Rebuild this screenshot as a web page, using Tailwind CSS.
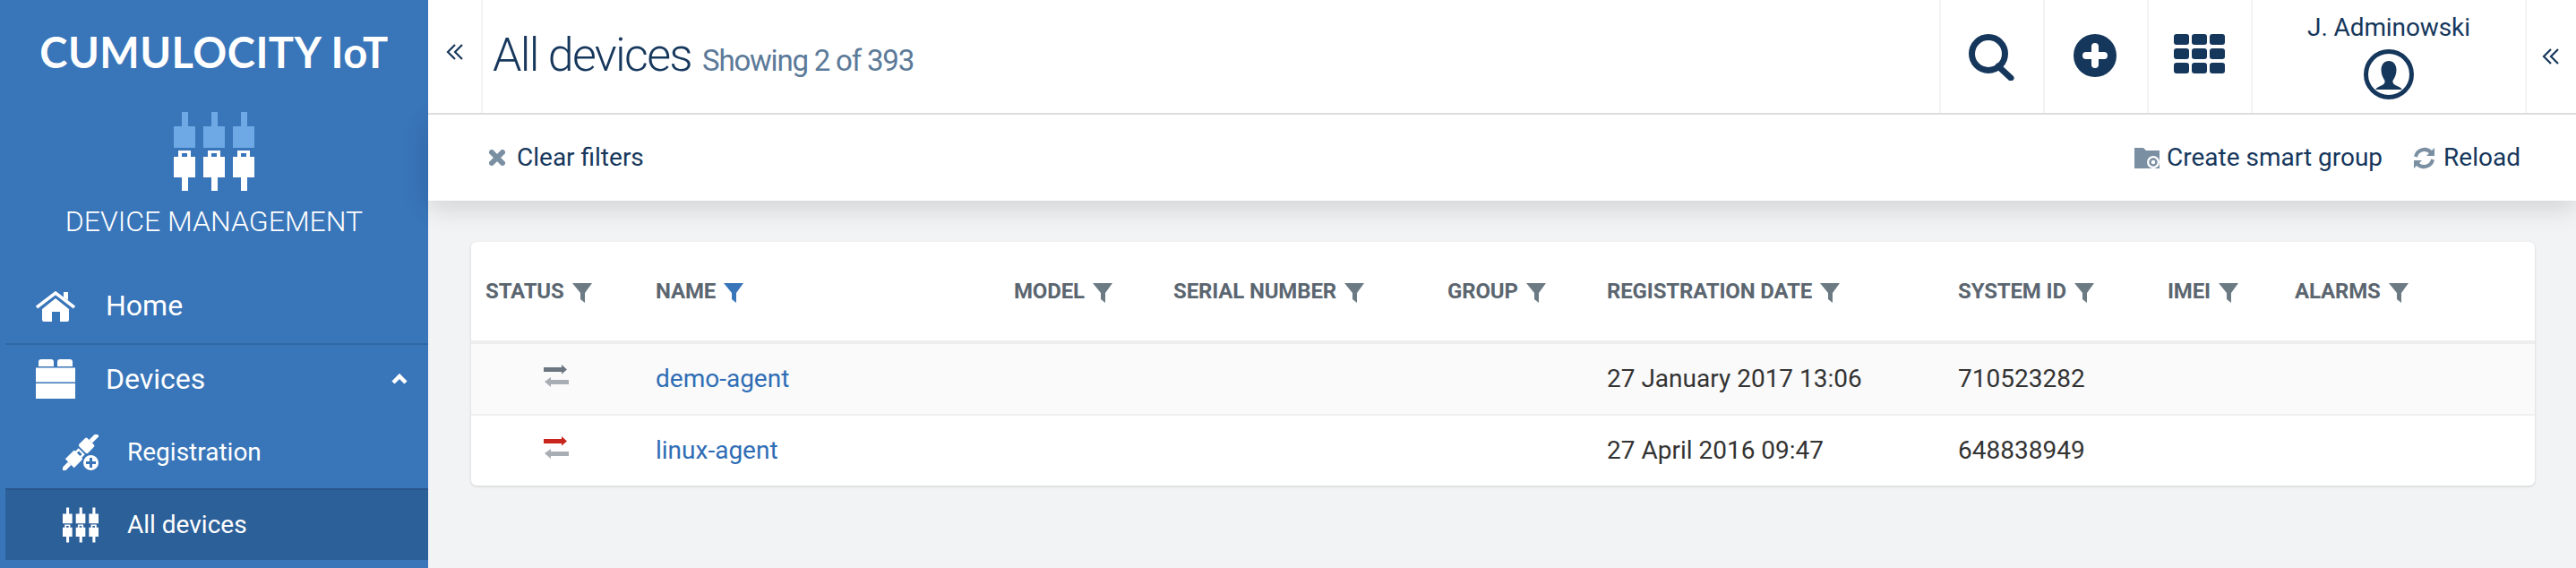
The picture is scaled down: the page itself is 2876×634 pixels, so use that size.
<!DOCTYPE html>
<html lang="en">
<head>
  <meta charset="UTF-8">
  <title>All devices</title>
  <script src="https://cdn.jsdelivr.net/npm/@tailwindcss/browser@4"></script>
</head>
<body class="h-[634px] w-[2876px] overflow-hidden bg-[#f2f3f5] font-['Roboto',sans-serif] flex">

  <!-- icon sprites -->
  <svg class="hidden">
    <symbol id="funnel" viewBox="0 0 22 22"><path d="M0 0H22L14 11V22L9 18V11Z" fill="currentColor"/></symbol>
    <symbol id="chevrons" viewBox="0 0 20 18"><path d="M10 1L2 9L10 17M18 1L10 9L18 17" fill="none" stroke="currentColor" stroke-width="2.2"/></symbol>
    <symbol id="transfer" viewBox="0 0 28 25">
      <path d="M0 3H20V0L26 5.500L20 10.500V8H0Z" fill="currentColor"/>
      <path d="M28 17H8V14L1 19L8 25V22H28Z" fill="#a8aeb4"/>
    </symbol>
    <symbol id="plugs" viewBox="0 0 90 88">
      <g fill="currentColor">
        <path d="M9 0H16V16H24V40H0V16H9ZM42 0H49V16H57V40H33V16H42ZM75 0H82V16H90V40H66V16H75Z"/>
      </g>
      <g fill="#fff">
        <path fill-rule="evenodd" d="M5 43H19V50H24V73H16V88H9V73H0V50H5ZM9 46V50H15V46Z"/>
        <path fill-rule="evenodd" d="M38 43H52V50H57V73H49V88H42V73H33V50H38ZM42 46V50H48V46Z"/>
        <path fill-rule="evenodd" d="M71 43H85V50H90V73H82V88H75V73H66V50H71ZM75 46V50H81V46Z"/>
      </g>
    </symbol>
  </svg>

  <!-- Sidebar -->
  <aside class="w-[478px] shrink-0 bg-[#3875b9] text-white flex flex-col">
    <div class="h-[301px] flex flex-col items-center">
      <div class="mt-[30px] text-[47px] leading-[56px] font-bold tracking-[0.5px] font-['Lato',sans-serif]">CUMULOCITY IoT</div>
      <svg class="mt-[39px] w-[90px] h-[88px] text-[#6ea8e5]"><use href="#plugs"/></svg>
      <div class="mt-[14px] text-[32px] leading-[40px] font-light">DEVICE MANAGEMENT</div>
    </div>

    <a class="h-[82px] flex items-center pl-[40px] text-[32px]">
      <svg class="w-[44px] h-[34px] mt-[-1px]" viewBox="0 0 44 34" fill="#fff">
        <path d="M1 18L22 2L43 18" fill="none" stroke="#fff" stroke-width="3.500"/>
        <path d="M31 1H36V10L31 7Z"/>
        <path d="M7 20L22 8L37 20V32Q37 34 35 34H27V23H18V34H9Q7 34 7 32Z"/>
      </svg>
      <span class="ml-[35px] -translate-x-[1px] -translate-y-[1px]">Home</span>
    </a>
    <div class="ml-[6px] h-[2px] bg-[#3068a6]"></div>
    <a class="h-[76px] flex items-center pl-[40px] pr-[23px] text-[32px]">
      <svg class="w-[44px] h-[44px]" viewBox="0 0 44 44" fill="#fff">
        <path d="M3 8V3Q3 0 6 0H17Q20 0 20 3V8ZM24 8V3Q24 0 27 0H38Q41 0 41 3V8Z"/>
        <rect y="9.500" width="44" height="16"/>
        <rect y="27" width="44" height="17"/>
      </svg>
      <span class="ml-[34px]">Devices</span>
      <svg class="ml-auto w-[18px] h-[12px]" viewBox="0 0 18 12"><path d="M2 10L9 3L16 10" fill="none" stroke="#fff" stroke-width="4.500"/></svg>
    </a>
    <a class="mt-[4px] h-[80px] flex items-center pl-[70px] text-[28px]">
      <svg class="w-[40px] h-[40px]" viewBox="0 0 40 40" fill="#fff">
        <g transform="rotate(45 27 12)">
          <rect x="20" y="6" width="14" height="13" rx="2"/>
          <rect x="24.500" y="-5" width="5" height="11"/>
        </g>
        <g transform="rotate(45 12 28)">
          <path fill-rule="evenodd" d="M7 15H17V20H19V34H5V20H7ZM9.500 17V20H14.500V17Z"/>
          <rect x="9.500" y="34" width="5" height="11"/>
        </g>
        <circle cx="31.500" cy="31.500" r="9.500" fill="#fff" stroke="#3875b9" stroke-width="2"/>
        <path d="M31.500 26V37M26 31.500H37" stroke="#3875b9" stroke-width="3"/>
      </svg>
      <span class="ml-[33px] -translate-x-[1px]">Registration</span>
    </a>
    <a class="ml-[6px] h-[80px] flex items-center pl-[64px] text-[28px] bg-[#2c6099] border-t-2 border-[#28568a]">
      <svg class="w-[40px] h-[40px] text-white"><use href="#plugs"/></svg>
      <span class="ml-[33px] -translate-x-[1px]">All devices</span>
    </a>
  </aside>

  <!-- Main column -->
  <div class="flex-1 min-w-0 flex flex-col">
    <header class="relative z-10 h-[128px] bg-white border-b-2 border-[#dddddd] flex items-stretch text-[#16375c]">
      <button class="w-[61px] border-r-2 border-[#f3f3f3] flex items-center justify-center pb-[10px]">
        <svg class="w-[20px] h-[18px]"><use href="#chevrons"/></svg>
      </button>
      <div class="flex-1 pl-[11px] flex items-baseline pt-[32px]">
        <h1 class="text-[52px] leading-[60px] font-light tracking-[-1.700px]">All devices</h1>
        <span class="ml-[12px] text-[33px] tracking-[-1.200px] text-[#5c7a99]">Showing 2 of 393</span>
      </div>
      <div class="w-[116px] border-l-2 border-[#f3f3f3] flex justify-center pt-[38px]">
        <svg class="w-[52px] h-[52px]" viewBox="0 0 52 52" fill="none" stroke="#16375c">
          <circle cx="22" cy="22" r="18.500" stroke-width="7"/>
          <path d="M33 36L47 49" stroke-width="7" stroke-linecap="round"/>
        </svg>
      </div>
      <div class="w-[116px] border-l-2 border-[#f3f3f3] flex justify-center pt-[38px] pr-[2px]">
        <svg class="w-[48px] h-[48px]" viewBox="0 0 48 48">
          <circle cx="24" cy="24" r="24" fill="#16375c"/>
          <path d="M24 14V34M14 24H34" stroke="#fff" stroke-width="8" stroke-linecap="round"/>
        </svg>
      </div>
      <div class="w-[116px] border-l-2 border-[#f3f3f3] flex justify-center pt-[38px] pr-[2px]">
        <svg class="w-[57px] h-[44px]" viewBox="0 0 57 44" fill="#16375c">
          <rect width="17" height="12" rx="3"/><rect x="20" width="17" height="12" rx="3"/><rect x="40" width="17" height="12" rx="3"/>
          <rect y="16" width="17" height="12" rx="3"/><rect x="20" y="16" width="17" height="12" rx="3"/><rect x="40" y="16" width="17" height="12" rx="3"/>
          <rect y="32" width="17" height="12" rx="3"/><rect x="20" y="32" width="17" height="12" rx="3"/><rect x="40" y="32" width="17" height="12" rx="3"/>
        </svg>
      </div>
      <div class="w-[306px] border-l-2 border-[#f3f3f3] flex flex-col items-center pt-[14px]">
        <div class="text-[28px] leading-[34px] tracking-[-0.100px]">J. Adminowski</div>
        <svg class="mt-[7px] w-[56px] h-[56px]" viewBox="0 0 56 56">
          <circle cx="28" cy="28" r="25.500" fill="none" stroke="#16375c" stroke-width="5"/>
          <path fill="#16375c" d="M28 13c-5 0-8.500 4-8.500 10c0 5 2 9 4 12c.5 3-1 4.500-7 7c-2 1-3 2-3 3h29c0-1-1-2-3-3c-6-2.500-7.500-4-7-7c2-3 4-7 4-12c0-6-3.500-10-8.500-10z"/>
        </svg>
      </div>
      <button class="w-[57px] border-l-2 border-[#f3f3f3] flex items-center justify-center pr-[2px]">
        <svg class="w-[20px] h-[18px]"><use href="#chevrons"/></svg>
      </button>
    </header>

    <div class="relative h-[96px] bg-white shadow-[0_8px_28px_rgba(0,0,0,0.14)] flex items-center justify-between pl-[68px] pr-[62px] text-[28px] text-[#16375c]">
      <a class="flex items-center">
        <svg class="w-[18px] h-[18px]" viewBox="0 0 18 18"><path d="M3 3L15 15M15 3L3 15" stroke="#7b8fa3" stroke-width="6" stroke-linecap="round"/></svg>
        <span class="ml-[13px]">Clear filters</span>
      </a>
      <div class="flex items-center">
        <svg class="w-[28px] h-[23px]" viewBox="0 0 28 23">
          <path fill="#7b8fa3" d="M0 0H10L13 3H28V23H0Z"/>
          <circle cx="21" cy="16" r="7" fill="#fff"/>
          <circle cx="21" cy="16" r="3.500" fill="none" stroke="#7b8fa3" stroke-width="2.500"/>
        </svg>
        <span class="ml-[8px]">Create smart group</span>
        <svg class="ml-[34px] w-[25px] h-[25px]" viewBox="0 0 25 25" fill="none" stroke="#7b8fa3" stroke-width="4">
          <path d="M3 11A10 10 0 0 1 20 6"/><path d="M22 14A10 10 0 0 1 5 19"/>
          <path d="M24 1V10H15Z" fill="#7b8fa3" stroke="none"/><path d="M1 24V15H10Z" fill="#7b8fa3" stroke="none"/>
        </svg>
        <span class="ml-[9px]">Reload</span>
      </div>
    </div>

    <!-- Devices table -->
    <main class="mt-[46px] ml-[48px] mr-[46px] bg-white rounded-[6px] shadow-[0_1px_3px_rgba(0,0,0,0.15)]">
      <div class="h-[110px] grid grid-cols-[206px_400px_178px_306px_178px_392px_234px_142px_1fr] items-center pl-[16px] text-[24px] font-bold tracking-[-0.150px] text-[#5b6670]">
        <div class="flex items-center gap-[9px]">STATUS <svg class="w-[22px] h-[22px] mt-[4px] text-[#6c7a84]"><use href="#funnel"/></svg></div>
        <div class="flex items-center gap-[9px] -ml-[16px]">NAME <svg class="w-[22px] h-[22px] mt-[4px] text-[#3875b9]"><use href="#funnel"/></svg></div>
        <div class="flex items-center gap-[9px] -ml-[16px]">MODEL <svg class="w-[22px] h-[22px] mt-[4px] text-[#6c7a84]"><use href="#funnel"/></svg></div>
        <div class="flex items-center gap-[9px] -ml-[16px]">SERIAL NUMBER <svg class="w-[22px] h-[22px] mt-[4px] text-[#6c7a84]"><use href="#funnel"/></svg></div>
        <div class="flex items-center gap-[9px] -ml-[16px]">GROUP <svg class="w-[22px] h-[22px] mt-[4px] text-[#6c7a84]"><use href="#funnel"/></svg></div>
        <div class="flex items-center gap-[9px] -ml-[16px]">REGISTRATION DATE <svg class="w-[22px] h-[22px] mt-[4px] text-[#6c7a84]"><use href="#funnel"/></svg></div>
        <div class="flex items-center gap-[9px] -ml-[16px]">SYSTEM ID <svg class="w-[22px] h-[22px] mt-[4px] text-[#6c7a84]"><use href="#funnel"/></svg></div>
        <div class="flex items-center gap-[9px] -ml-[16px]">IMEI <svg class="w-[22px] h-[22px] mt-[4px] text-[#6c7a84]"><use href="#funnel"/></svg></div>
        <div class="flex items-center gap-[9px] -ml-[16px]">ALARMS <svg class="w-[22px] h-[22px] mt-[4px] text-[#6c7a84]"><use href="#funnel"/></svg></div>
      </div>
      <div class="h-[82px] border-t-4 border-b-0 border-[#eeeeee] bg-[#fafafa] grid grid-cols-[206px_400px_178px_306px_178px_392px_234px_142px_1fr] items-center text-[28px] text-[#333333]">
        <div class="pl-[81px] pb-[8px]"><svg class="w-[28px] h-[25px] text-[#6c7680]"><use href="#transfer"/></svg></div>
        <a class="text-[#2f6db5]">demo-agent</a>
        <div></div><div></div><div></div>
        <div class="whitespace-nowrap">27 January 2017 13:06</div>
        <div>710523282</div>
      </div>
      <div class="h-[80px] border-t-2 border-[#f0f0f0] grid grid-cols-[206px_400px_178px_306px_178px_392px_234px_142px_1fr] items-center text-[28px] text-[#333333]">
        <div class="pl-[81px] pb-[8px]"><svg class="w-[28px] h-[25px] text-[#c9251c]"><use href="#transfer"/></svg></div>
        <a class="text-[#2f6db5]">linux-agent</a>
        <div></div><div></div><div></div>
        <div class="whitespace-nowrap">27 April 2016 09:47</div>
        <div>648838949</div>
      </div>
    </main>
  </div>
</body>
</html>
